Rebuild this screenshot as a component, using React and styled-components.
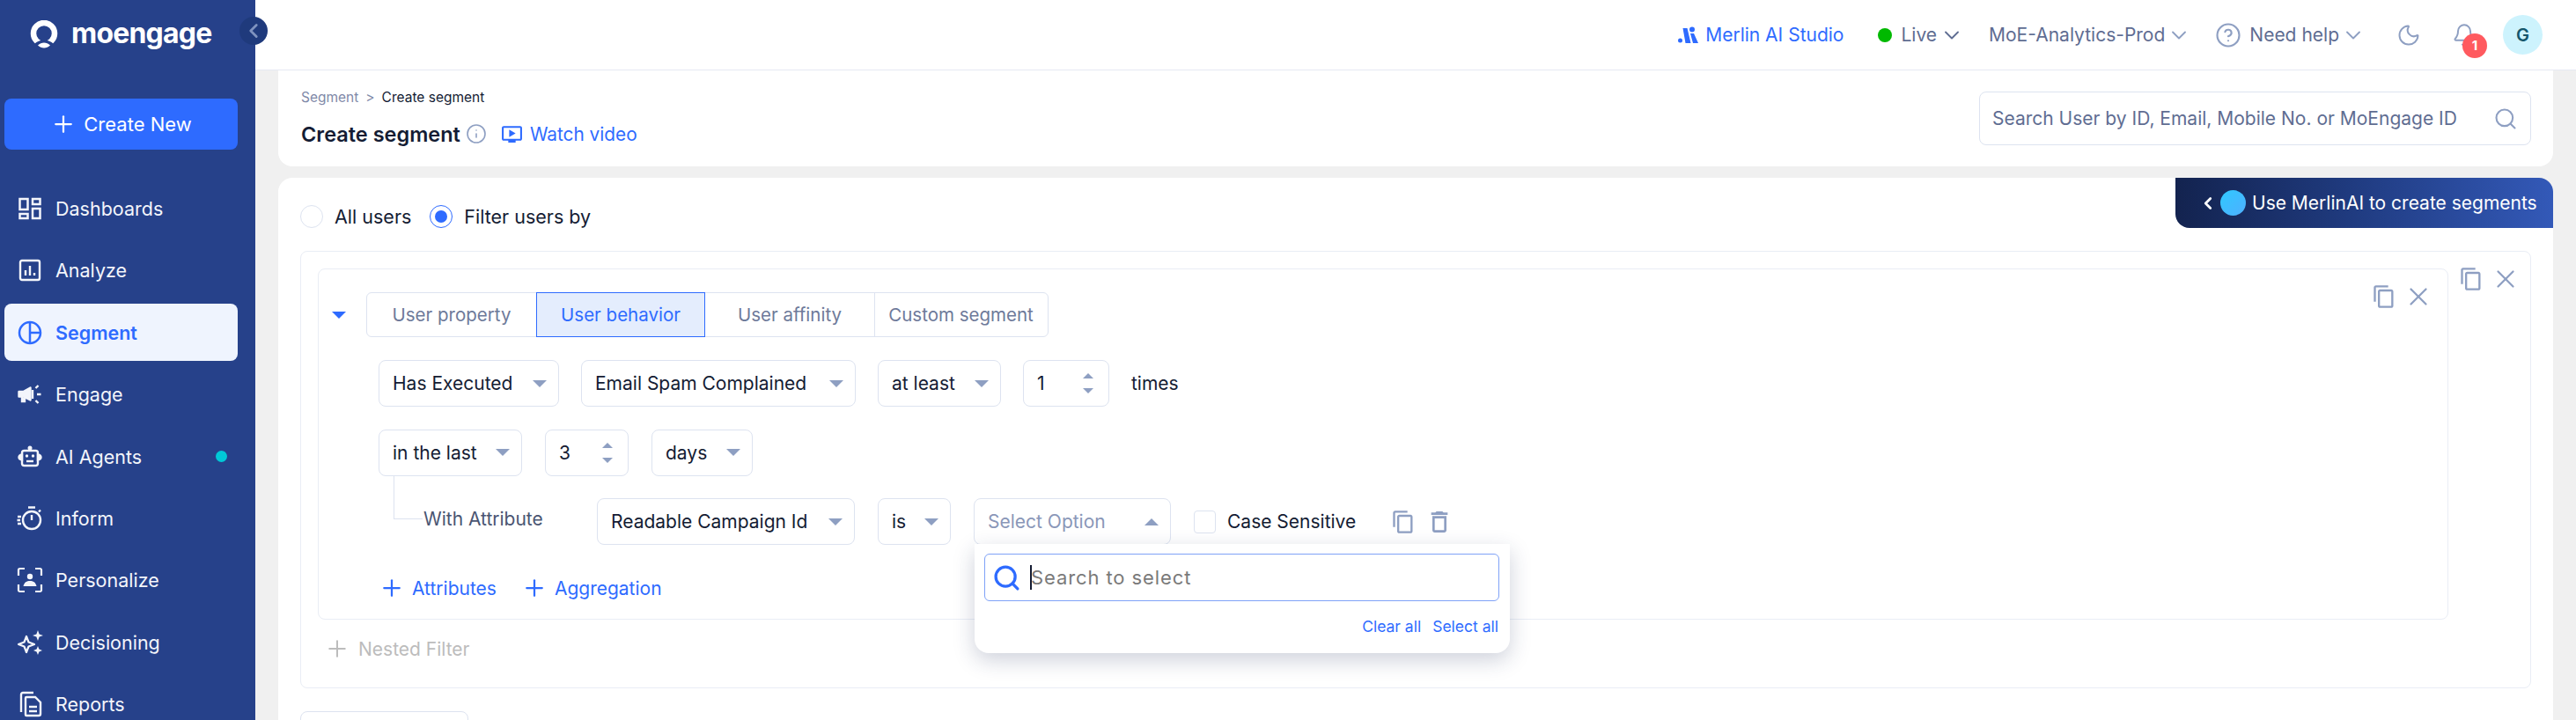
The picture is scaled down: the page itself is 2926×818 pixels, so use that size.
import styled, {createGlobalStyle} from "styled-components";
import {ChevronDown, ChevronLeft, CircleHelp, Info, Moon, Bell, Search, Plus, X} from "lucide-react";
import {MdOutlineContentCopy, MdOutlineDelete, MdOutlineOndemandVideo} from "react-icons/md";

const GlobalStyle = createGlobalStyle`
    html, body {
        margin: 0;
        padding: 0;
        background: #ffffff;
    }

    * {
        box-sizing: border-box;
    }

    body {
        font-family: "Inter", "Noto Sans", sans-serif;
        color: #141c33;
    }
`

const Shell = styled.div`
    position: relative;
    width: 2926px;
    height: 818px;
    display: flex;
    overflow: hidden;
`

/* sidebar */
const Sidebar = styled.aside`
    width: 290px;
    flex-shrink: 0;
    background: #26418a;
    padding-left: 5px;
    display: flex;
    flex-direction: column;
    position: relative;
`

const LogoRow = styled.div`
    height: 112px;
    flex-shrink: 0;
    padding: 23px 0 0 29px;
    display: flex;
    align-items: flex-start;
    gap: 15px;
    color: #ffffff;
`

const LogoText = styled.span`
    font-size: 32px;
    font-weight: 700;
    line-height: 33px;
    letter-spacing: -0.8px;
    margin-top: -2px;
`

const CreateButton = styled.div`
    width: 265px;
    height: 58px;
    flex-shrink: 0;
    border-radius: 8px;
    background: #2e6bff;
    color: #ffffff;
    font-size: 22px;
    display: flex;
    align-items: center;
    justify-content: center;
    gap: 8px;
`

const Nav = styled.nav`
    margin-top: 34.5px;
    display: flex;
    flex-direction: column;
    gap: 5.4px;
`

const NavItem = styled.div`
    width: 265px;
    height: 65px;
    flex-shrink: 0;
    border-radius: 8px;
    padding-left: 15px;
    display: flex;
    align-items: center;
    gap: 15px;
    font-size: 21.5px;
    font-weight: ${props => props.$active ? 600 : 400};
    color: ${props => props.$active ? '#2e6bff' : '#f3f5fb'};
    background: ${props => props.$active ? '#eff4fe' : 'transparent'};
`

const NavIcon = styled.span`
    width: 28px;
    display: flex;
    justify-content: center;

    svg {
        flex-shrink: 0;
    }
`

const NavDot = styled.span`
    width: 13px;
    height: 13px;
    border-radius: 50%;
    background: #00c8d7;
    margin-left: auto;
    margin-right: 12px;
`

const CollapseHandle = styled.div`
    position: absolute;
    top: 19px;
    left: 272px;
    width: 32px;
    height: 32px;
    border-radius: 50%;
    background: #1f3a7c;
    color: #7f93bf;
    display: flex;
    align-items: center;
    justify-content: center;
`

/* top bar */
const Main = styled.main`
    flex: 1;
    min-width: 0;
    display: flex;
    flex-direction: column;
`

const TopBar = styled.header`
    height: 80px;
    flex-shrink: 0;
    background: #ffffff;
    border-bottom: 1px solid #e6e9f3;
    padding-right: 38px;
    display: flex;
    align-items: center;
    justify-content: flex-end;
    font-size: 21px;
    color: #5f6d92;
`

const TopItem = styled.div`
    display: flex;
    align-items: center;
    gap: ${props => props.$gap || 9}px;
    margin-left: ${props => props.$left || 0}px;
    color: ${props => props.$blue ? '#2e6bff' : 'inherit'};
`

const Caret = styled(ChevronDown)`
    margin-left: -7px;
    color: ${props => props.$dark ? '#5f6d92' : '#8e9fc2'};
`

const LiveDot = styled.span`
    width: 16px;
    height: 16px;
    border-radius: 50%;
    background: #00b900;
`

const BellWrap = styled.div`
    position: relative;
    height: 28px;
    color: #8e9fc2;
    margin-left: 35px;
`

const Badge = styled.span`
    position: absolute;
    left: 12px;
    top: 12px;
    width: 28px;
    height: 28px;
    border-radius: 50%;
    background: #ff5a5f;
    color: #ffffff;
    font-size: 15px;
    font-weight: 700;
    display: flex;
    align-items: center;
    justify-content: center;
`

const Avatar = styled.div`
    width: 45px;
    height: 45px;
    border-radius: 50%;
    background: #cdf3fd;
    color: #14566b;
    font-size: 20px;
    font-weight: 600;
    margin-left: 30px;
    display: flex;
    align-items: center;
    justify-content: center;
`

/* content */
const Content = styled.div`
    flex: 1;
    min-height: 0;
    background: #f0f0f0;
    padding: 0 26px;
    display: flex;
    flex-direction: column;
    gap: 13px;
`

const HeaderCard = styled.section`
    height: 109px;
    flex-shrink: 0;
    background: #ffffff;
    border-radius: 0 0 16px 16px;
    padding: 0 25px 0 26px;
    display: flex;
    align-items: center;
    justify-content: space-between;
`

const TitleBlock = styled.div`
    display: flex;
    flex-direction: column;
    gap: 15px;
`

const Breadcrumb = styled.div`
    display: flex;
    align-items: center;
    gap: 8px;
    font-size: 15.5px;
    line-height: 20px;
    color: #7f89a8;

    b {
        font-weight: 400;
        color: #141c33;
    }
`

const TitleRow = styled.div`
    display: flex;
    align-items: center;
    height: 32px;
`

const Title = styled.h1`
    margin: 0 6px 0 0;
    font-size: 23.5px;
    font-weight: 600;
    color: #141c33;
`

const WatchVideo = styled.div`
    margin-left: 16px;
    display: flex;
    align-items: center;
    gap: 8px;
    font-size: 20.8px;
    color: #2e6bff;
`

const UserSearch = styled.div`
    width: 627px;
    height: 61px;
    border: 1px solid #dde3f0;
    border-radius: 8px;
    padding: 0 14px 0 14px;
    display: flex;
    align-items: center;
    justify-content: space-between;
    font-size: 21px;
    color: #5f6d92;
    white-space: nowrap;
`

const FilterCard = styled.section`
    flex: 1;
    min-height: 0;
    background: #ffffff;
    border-radius: 16px 16px 0 0;
    padding: 31px 25px 0;
    position: relative;
`

const MerlinBanner = styled.div`
    position: absolute;
    top: 0;
    right: 0;
    width: 429px;
    height: 57px;
    border-radius: 0 16px 0 16px;
    background: linear-gradient(90deg, #13234f 0%, #1f3a7e 45%, #3359b8 100%);
    color: #ffffff;
    font-size: 21px;
    padding-left: 26px;
    display: flex;
    align-items: center;
    white-space: nowrap;
`

const MerlinOrb = styled.span`
    width: 29px;
    height: 29px;
    border-radius: 50%;
    background: linear-gradient(135deg, #2fc8ff, #4fb0ff);
    margin: 0 7px 0 3px;
`

const RadioRow = styled.div`
    display: flex;
    align-items: center;
    height: 26px;
    font-size: 21.5px;
`

const Radio = styled.span`
    width: 26px;
    height: 26px;
    border-radius: 50%;
    border: 1px solid ${props => props.$on ? '#2e6bff' : '#dde3f0'};
    margin: 0 13px 0 ${props => props.$left || 0}px;
    display: flex;
    align-items: center;
    justify-content: center;

    &::after {
        content: "";
        width: 14px;
        height: 14px;
        border-radius: 50%;
        background: ${props => props.$on ? '#2e6bff' : 'transparent'};
    }
`

const OuterBox = styled.div`
    margin-top: 26px;
    height: 497px;
    border: 1px solid #e9edf5;
    border-radius: 8px;
    padding: 19px 0 0 19px;
    display: grid;
    grid-template-columns: 1fr 93px;
    grid-template-rows: 399px auto;
`

const InnerBox = styled.div`
    border: 1px solid #e9edf5;
    border-radius: 8px;
    padding: 17px 16px 0 15px;
`

const InnerHeader = styled.div`
    display: flex;
    align-items: flex-start;
    justify-content: space-between;
`

const TabRow = styled.div`
    margin-top: 9px;
    display: flex;
    align-items: center;
    gap: 23px;
`

const DownTriangle = styled.span`
    width: 0;
    height: 0;
    border-left: ${props => props.$size || 8}px solid transparent;
    border-right: ${props => props.$size || 8}px solid transparent;
    border-top: ${props => props.$size || 8}px solid ${props => props.$color || '#8e9fc2'};
    flex-shrink: 0;
`

const UpTriangle = styled.span`
    width: 0;
    height: 0;
    border-left: ${props => props.$size || 8}px solid transparent;
    border-right: ${props => props.$size || 8}px solid transparent;
    border-bottom: ${props => props.$size || 8}px solid #8e9fc2;
    flex-shrink: 0;
`

const Tabs = styled.div`
    display: flex;
    height: 51px;
    border: 1px solid #dde3f0;
    border-radius: 6px;
`

const Tab = styled.div`
    width: ${props => props.$width}px;
    margin: -1px 0;
    display: flex;
    align-items: center;
    justify-content: center;
    font-size: 20.5px;
    color: ${props => props.$active ? '#2e6bff' : '#6e7a9a'};
    background: ${props => props.$active ? '#e4edfd' : 'transparent'};
    border: 1px solid ${props => props.$active ? '#2e6bff' : 'transparent'};
    border-left-color: ${props => props.$divider ? '#dde3f0' : props.$active ? '#2e6bff' : 'transparent'};
`

const ActionIcons = styled.div`
    display: flex;
    align-items: center;
    gap: 8px;
    color: #8e9fc2;
    height: 28px;
`

const Rows = styled.div`
    margin-top: 26px;
    padding-left: 53px;
    display: flex;
    flex-direction: column;
    gap: 25.5px;
`

const Row = styled.div`
    display: flex;
    align-items: center;
    gap: ${props => props.$gap || 25}px;
    font-size: 21px;
`

const SelectBox = styled.div`
    width: ${props => props.$width}px;
    height: 53px;
    flex-shrink: 0;
    position: relative;
    border: 1px solid #dde3f0;
    border-radius: 8px;
    padding: 0 13px 0 15px;
    display: flex;
    align-items: center;
    justify-content: space-between;
    color: ${props => props.$placeholder ? '#8a97b8' : '#141c33'};
    background: #ffffff;
    white-space: nowrap;
`

const Stepper = styled.div`
    display: flex;
    flex-direction: column;
    gap: 11px;
    margin-right: 4px;
`

const AttributeLabel = styled.div`
    width: 222px;
    padding-left: 51px;
    position: relative;
    color: #4a5572;
    margin-bottom: 6px;

    &::before {
        content: "";
        position: absolute;
        left: 17px;
        top: -37px;
        width: 32px;
        height: 49px;
        border-left: 1px solid #dde3f0;
        border-bottom: 1px solid #dde3f0;
    }
`

const CheckBox = styled.span`
    width: 25px;
    height: 26px;
    border: 1px solid #dde3f0;
    border-radius: 4px;
    flex-shrink: 0;
`

const CaseText = styled.span`
    margin-left: -13px;
`

const RuleIcons = styled.div`
    margin-left: 14px;
    display: flex;
    align-items: center;
    gap: 11px;
    color: #8e9fc2;
`

const AddRow = styled.div`
    margin-top: 34px;
    height: 30px;
    padding-left: 53px;
    display: flex;
    align-items: center;
    gap: 28px;
    font-size: 21px;
    color: #2e6bff;
`

const AddLink = styled.div`
    display: flex;
    align-items: center;
    gap: 8px;
`

const SideActions = styled.div`
    padding-left: 12px;
    margin-top: -2px;
`

const NestedRow = styled.div`
    grid-column: 1 / -1;
    padding: 20px 0 0 7px;
    height: 46px;
    display: flex;
    align-items: center;
    gap: 9px;
    font-size: 21px;
    color: #bcbcbc;
`

const NextButton = styled.div`
    margin-top: 26px;
    width: 191px;
    height: 50px;
    border: 1px solid #dde3f0;
    border-radius: 8px;
`

/* dropdown open under Select Option */
const Popover = styled.div`
    position: absolute;
    z-index: 5;
    top: 51px;
    left: 0;
    width: 608px;
    height: 124px;
    background: #ffffff;
    border-radius: 0 0 16px 16px;
    box-shadow: 0 8px 24px rgba(30, 45, 90, 0.22);
    padding: 11px 12px 0 11px;
`

const PopoverSearch = styled.div`
    height: 54px;
    border: 1px solid #7fa2f7;
    border-radius: 6px;
    padding-left: 8px;
    display: flex;
    align-items: center;
    color: #2e6bff;
    font-size: 22px;
`

const Cursor = styled.span`
    width: 2px;
    height: 28px;
    background: #141c33;
    margin: 0 -1px 0 10px;
`

const Placeholder = styled.span`
    color: #7a7a7a;
    letter-spacing: 0.9px;
`

const PopoverLinks = styled.div`
    margin-top: 18px;
    padding-right: 1px;
    display: flex;
    justify-content: flex-end;
    gap: 13px;
    font-size: 17.5px;
    color: #2e6bff;
`

function DashboardsIcon() {
  return (
      <svg width="28" height="28" viewBox="0 0 28 28" fill="none" stroke="currentColor" strokeWidth="2.5">
        <rect x="2.5" y="3" width="9" height="12" />
        <rect x="17" y="3" width="8.5" height="6" />
        <rect x="2.5" y="20" width="9" height="5" />
        <rect x="17" y="14" width="8.5" height="11" />
      </svg>
  );
}

function AnalyzeIcon() {
  return (
      <svg width="28" height="28" viewBox="0 0 28 28" fill="none" stroke="currentColor" strokeWidth="2.4">
        <rect x="3" y="3" width="22" height="22" rx="2" />
        <path d="M9 20v-6M14 20V9M19 20v-3" />
      </svg>
  );
}

function SegmentIcon() {
  return (
      <svg width="28" height="28" viewBox="0 0 28 28" fill="none" stroke="currentColor" strokeWidth="2.5">
        <circle cx="14" cy="14" r="12" />
        <path d="M14 2v24M14 14h12" />
      </svg>
  );
}

function EngageIcon() {
  return (
      <svg width="28" height="28" viewBox="0 0 28 28" fill="none" stroke="currentColor" strokeWidth="2.4">
        <path d="M1.500 11v5.500h5l8 4v-14l-8 4.500z" fill="currentColor" strokeLinejoin="round" />
        <path d="M5 17v5h3v-4" fill="currentColor" />
        <path d="M17 9v10M20.500 7l3-3M22 14h4.500M20.500 21l3 3" />
      </svg>
  );
}

function AgentsIcon() {
  return (
      <svg width="28" height="28" viewBox="0 0 28 28" fill="none" stroke="currentColor" strokeWidth="2.4">
        <rect x="5" y="7" width="18" height="17" rx="2.5" />
        <circle cx="14" cy="4" r="2.5" fill="currentColor" stroke="none" />
        <path d="M5 11.500c-2.500 .5-3.500 2-3.500 3s1 2.500 3.500 3zM23 11.500c2.500 .5 3.500 2 3.500 3s-1 2.500-3.500 3z" fill="currentColor" />
        <circle cx="10.500" cy="13" r="1.700" fill="currentColor" stroke="none" />
        <circle cx="17.500" cy="13" r="1.700" fill="currentColor" stroke="none" />
        <path d="M10 19h8" />
      </svg>
  );
}

function InformIcon() {
  return (
      <svg width="30" height="30" viewBox="0 0 30 30" fill="none" stroke="currentColor" strokeWidth="2.4">
        <circle cx="17" cy="17" r="10" />
        <path d="M13 2.500h8M17 11v6M25 7.500l2-2" />
        <path d="M1 13h4M0.500 17h3.500M1 21h4" />
      </svg>
  );
}

function PersonalizeIcon() {
  return (
      <svg width="30" height="30" viewBox="0 0 30 30" fill="none" stroke="currentColor" strokeWidth="2.2">
        <path d="M9 2H3.500a1.500 1.500 0 0 0-1.500 1.500V10M21 2h5.500A1.500 1.500 0 0 1 28 3.500V10M9 28H3.500A1.500 1.500 0 0 1 2 26.500V20M21 28h5.500a1.500 1.500 0 0 0 1.500-1.500V20" />
        <circle cx="15" cy="11" r="3.200" fill="currentColor" stroke="none" />
        <path d="M7.500 22c1-4.500 4-6 7.500-6s6.500 1.500 7.500 6z" fill="currentColor" stroke="none" />
      </svg>
  );
}

function DecisioningIcon() {
  return (
      <svg width="30" height="30" viewBox="0 0 30 30" fill="none" stroke="currentColor" strokeWidth="2.2">
        <path d="M11 8l2.500 6.500L20 17l-6.500 2.500L11 26l-2.500-6.500L2 17l6.500-2.500z" strokeLinejoin="round" />
        <path d="M24 1l1.600 4.400L30 7l-4.400 1.600L24 13l-1.600-4.400L18 7l4.400-1.600zM24 19l1.400 3.600L29 24l-3.600 1.400L24 29l-1.400-3.600L19 24l3.600-1.400z" fill="currentColor" stroke="none" />
      </svg>
  );
}

function ReportsIcon() {
  return (
      <svg width="28" height="30" viewBox="0 0 28 30" fill="none" stroke="currentColor" strokeWidth="2.4">
        <path d="M18 2H6a2 2 0 0 0-2 2v20" />
        <path d="M10 7h10l6 6v13a2 2 0 0 1-2 2H10a1 1 0 0 1-1-1V8a1 1 0 0 1 1-1z" />
        <path d="M13 18h9M13 23h9" />
      </svg>
  );
}

function LogoIcon() {
  return (
      <svg width="32" height="32" viewBox="0 0 32 32" fill="none">
        <circle cx="16" cy="15" r="12" stroke="currentColor" strokeWidth="6.5" />
        <path d="M5 27c3-3 6.500-4.500 11-4.500s8 1.500 11 4.500c-3 3.500-7 5-11 5s-8-1.500-11-5z" fill="#26418a" />
        <path d="M9 28.500c2-2 4.500-3 7-3s5 1 7 3c-2 2-4.500 3-7 3s-5-1-7-3z" fill="currentColor" />
      </svg>
  );
}

function MerlinIcon() {
  return (
      <svg width="23" height="19" viewBox="0 0 23 19" fill="#2e6bff">
        <circle cx="2.500" cy="16" r="2.500" />
        <path d="M5.500 2h5l4 17h-6z" />
        <circle cx="16" cy="3.500" r="3" />
        <path d="M14 8h4l5 11h-6z" />
      </svg>
  );
}

const navItems = [
  {label: 'Dashboards', icon: <DashboardsIcon />},
  {label: 'Analyze', icon: <AnalyzeIcon />},
  {label: 'Segment', icon: <SegmentIcon />, active: true},
  {label: 'Engage', icon: <EngageIcon />},
  {label: 'AI Agents', icon: <AgentsIcon />, dot: true},
  {label: 'Inform', icon: <InformIcon />},
  {label: 'Personalize', icon: <PersonalizeIcon />},
  {label: 'Decisioning', icon: <DecisioningIcon />},
  {label: 'Reports', icon: <ReportsIcon />},
];

function Select({width, children}) {
  return (
      <SelectBox $width={width}>
        {children}
        <DownTriangle />
      </SelectBox>
  );
}

function NumberInput({width, value}) {
  return (
      <SelectBox $width={width}>
        {value}
        <Stepper>
          <UpTriangle $size={6} />
          <DownTriangle $size={6} />
        </Stepper>
      </SelectBox>
  );
}

export default function App() {
  return (
      <Shell>
        <GlobalStyle />
        <Sidebar>
          <LogoRow>
            <LogoIcon />
            <LogoText>moengage</LogoText>
          </LogoRow>
          <CreateButton>
            <Plus size={30} strokeWidth={1.8} />
            Create New
          </CreateButton>
          <Nav>
            {navItems.map((item) => (
                <NavItem key={item.label} $active={item.active}>
                  <NavIcon>{item.icon}</NavIcon>
                  {item.label}
                  {item.dot && <NavDot />}
                </NavItem>
            ))}
          </Nav>
          <CollapseHandle>
            <ChevronLeft size={26} strokeWidth={2.6} />
          </CollapseHandle>
        </Sidebar>

        <Main>
          <TopBar>
            <TopItem $blue $gap={8}>
              <MerlinIcon />
              Merlin AI Studio
            </TopItem>
            <TopItem $left={39} $gap={10}>
              <LiveDot />
              Live
              <Caret size={28} strokeWidth={1.6} $dark />
            </TopItem>
            <TopItem $left={28}>
              MoE-Analytics-Prod
              <Caret size={28} strokeWidth={1.6} />
            </TopItem>
            <TopItem $left={27}>
              <CircleHelp size={30} strokeWidth={1.7} color="#8e9fc2" />
              Need help
              <Caret size={28} strokeWidth={1.6} />
            </TopItem>
            <TopItem $left={35}>
              <Moon size={28} strokeWidth={1.7} color="#8e9fc2" />
            </TopItem>
            <BellWrap>
              <Bell size={28} strokeWidth={1.7} />
              <Badge>1</Badge>
            </BellWrap>
            <Avatar>G</Avatar>
          </TopBar>

          <Content>
            <HeaderCard>
              <TitleBlock>
                <Breadcrumb>
                  Segment
                  <span>&gt;</span>
                  <b>Create segment</b>
                </Breadcrumb>
                <TitleRow>
                  <Title>Create segment</Title>
                  <Info size={24} strokeWidth={1.6} color="#8e9fc2" />
                  <WatchVideo>
                    <MdOutlineOndemandVideo size={25} />
                    Watch video
                  </WatchVideo>
                </TitleRow>
              </TitleBlock>
              <UserSearch>
                Search User by ID, Email, Mobile No. or MoEngage ID
                <Search size={28} strokeWidth={1.8} color="#8e9fc2" />
              </UserSearch>
            </HeaderCard>

            <FilterCard>
              <MerlinBanner>
                <ChevronLeft size={22} strokeWidth={3} />
                <MerlinOrb />
                Use MerlinAI to create segments
              </MerlinBanner>
              <RadioRow>
                <Radio />
                All users
                <Radio $on $left={21} />
                Filter users by
              </RadioRow>
              <OuterBox>
                <InnerBox>
                  <InnerHeader>
                    <TabRow>
                      <DownTriangle $color="#2e6bff" />
                      <Tabs>
                        <Tab $width={192}>User property</Tab>
                        <Tab $width={192} $active>User behavior</Tab>
                        <Tab $width={192}>User affinity</Tab>
                        <Tab $width={197} $divider>Custom segment</Tab>
                      </Tabs>
                    </TabRow>
                    <ActionIcons>
                      <MdOutlineContentCopy size={28} />
                      <X size={34} strokeWidth={1.6} />
                    </ActionIcons>
                  </InnerHeader>
                  <Rows>
                    <Row>
                      <Select width={205}>Has Executed</Select>
                      <Select width={312}>Email Spam Complained</Select>
                      <Select width={140}>at least</Select>
                      <NumberInput width={98} value="1" />
                      times
                    </Row>
                    <Row $gap={26}>
                      <Select width={163}>in the last</Select>
                      <NumberInput width={95} value="3" />
                      <Select width={115}>days</Select>
                    </Row>
                    <Row $gap={26}>
                      <AttributeLabel>With Attribute</AttributeLabel>
                      <Select width={293}>Readable Campaign Id</Select>
                      <Select width={83}>is</Select>
                      <SelectBox $width={224} $placeholder>
                        Select Option
                        <UpTriangle />
                        <Popover>
                          <PopoverSearch>
                            <Search size={33} strokeWidth={2.4} />
                            <Cursor />
                            <Placeholder>Search to select</Placeholder>
                          </PopoverSearch>
                          <PopoverLinks>
                            <span>Clear all</span>
                            <span>Select all</span>
                          </PopoverLinks>
                        </Popover>
                      </SelectBox>
                      <CheckBox />
                      <CaseText>Case Sensitive</CaseText>
                      <RuleIcons>
                        <MdOutlineContentCopy size={28} />
                        <MdOutlineDelete size={32} />
                      </RuleIcons>
                    </Row>
                  </Rows>
                  <AddRow>
                    <AddLink>
                      <Plus size={30} strokeWidth={1.8} />
                      Attributes
                    </AddLink>
                    <AddLink>
                      <Plus size={30} strokeWidth={1.8} />
                      Aggregation
                    </AddLink>
                  </AddRow>
                </InnerBox>
                <SideActions>
                  <ActionIcons>
                    <MdOutlineContentCopy size={28} />
                    <X size={34} strokeWidth={1.6} />
                  </ActionIcons>
                </SideActions>
                <NestedRow>
                  <Plus size={30} strokeWidth={1.6} />
                  Nested Filter
                </NestedRow>
              </OuterBox>
              <NextButton />
            </FilterCard>
          </Content>
        </Main>
      </Shell>
  );
}
